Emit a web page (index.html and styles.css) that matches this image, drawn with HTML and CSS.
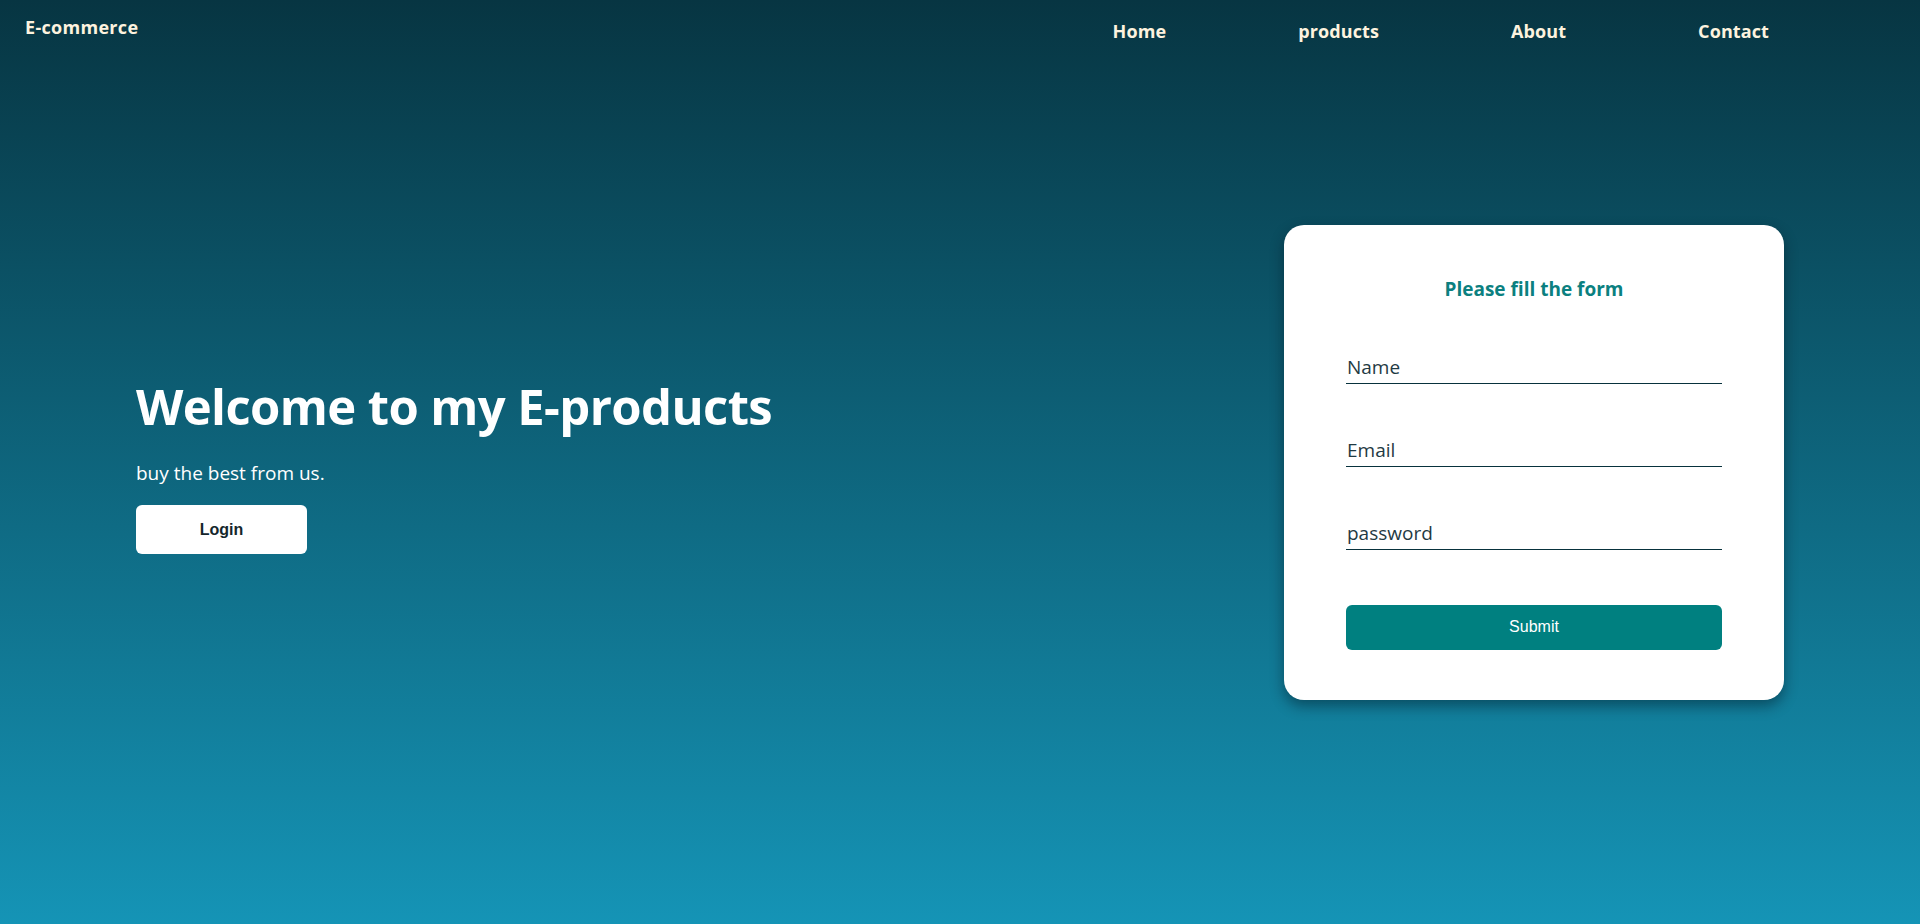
FILE: index.html
```html
<!DOCTYPE html>
<html lang="en">
<head>
<meta charset="utf-8">
<title>E-commerce</title>
<link rel="stylesheet" href="styles.css">
</head>
<body>
<header class="topbar">
  <div class="logo">E-commerce</div>
  <nav class="nav">
    <a href="#" class="nav-link">Home</a>
    <a href="#" class="nav-link">products</a>
    <a href="#" class="nav-link">About</a>
    <a href="#" class="nav-link">Contact</a>
  </nav>
</header>
<main class="hero">
  <section class="intro">
    <h1 class="intro-title">Welcome to my E-products</h1>
    <p class="intro-text">buy the best from us.</p>
    <button class="login-btn" type="button">Login</button>
  </section>
  <form class="card">
    <h3 class="card-title">Please fill the form</h3>
    <input class="field" type="text" placeholder="Name">
    <input class="field" type="email" placeholder="Email">
    <input class="field" type="password" placeholder="password">
    <button class="submit-btn" type="button">Submit</button>
  </form>
</main>
</body>
</html>
```
FILE: styles.css
```css
* { box-sizing: border-box; }
html, body { margin: 0; padding: 0; }
body {
  height: 924px;
  overflow: hidden;
  background: linear-gradient(to bottom, #073542 0%, #1594b6 100%);
  font-family: "Open Sans", "Noto Sans", sans-serif;
  color: #fff;
}
.topbar {
  height: 50px;
  display: flex;
  justify-content: space-between;
  align-items: flex-start;
  padding: 0 151px 0 25px;
}
.logo {
  margin-top: 15px;
  font-size: 18px;
  line-height: 24px;
  font-weight: 700;
  letter-spacing: 0.3px;
  color: #fdf3df;
}
.nav {
  margin-top: 19px;
  display: flex;
  gap: 132px;
}
.nav-link {
  font-size: 18px;
  line-height: 24px;
  font-weight: 700;
  letter-spacing: 0.1px;
  color: #fdf3df;
  text-decoration: none;
}
.hero {
  height: 874px;
  padding: 0 136px 50px 136px;
  display: flex;
  justify-content: space-between;
  align-items: center;
}
.intro {
  margin-top: 6px;
  display: flex;
  flex-direction: column;
  align-items: flex-start;
}
.intro-title {
  margin: 0;
  font-size: 49px;
  line-height: 60px;
  font-weight: 700;
  letter-spacing: -0.6px;
  color: #fff;
}
.intro-text {
  margin: 24px 0 0;
  font-size: 19px;
  line-height: 26px;
}
.login-btn {
  margin-top: 19px;
  width: 171px;
  height: 49px;
  border: none;
  border-radius: 6px;
  background: #fff;
  color: #14262c;
  font-family: "Liberation Sans", Arial, sans-serif;
  font-size: 16px;
  font-weight: 700;
  cursor: pointer;
}
.card {
  width: 500px;
  background: #fff;
  border-radius: 20px;
  box-shadow: 0 6px 14px rgba(0, 20, 30, 0.45);
  padding: 50px 62px 50px 62px;
  display: flex;
  flex-direction: column;
}
.card-title {
  margin: 0 0 49px;
  text-align: center;
  font-size: 19px;
  line-height: 28px;
  font-weight: 700;
  color: #0b8080;
}
.field {
  height: 32px;
  margin-bottom: 51px;
  border: none;
  border-bottom: 1px solid #08323d;
  padding: 0 1px;
  font-family: "Open Sans", "Noto Sans", sans-serif;
  font-size: 19px;
  color: #1c3942;
  outline: none;
  background: transparent;
}
.field:last-of-type { margin-bottom: 55px; }
.field::placeholder { color: #1f3a43; opacity: 1; }
.submit-btn {
  height: 45px;
  border: none;
  border-radius: 6px;
  background: #008080;
  color: #fff;
  font-family: "Liberation Sans", Arial, sans-serif;
  font-size: 16px;
  cursor: pointer;
}
```
